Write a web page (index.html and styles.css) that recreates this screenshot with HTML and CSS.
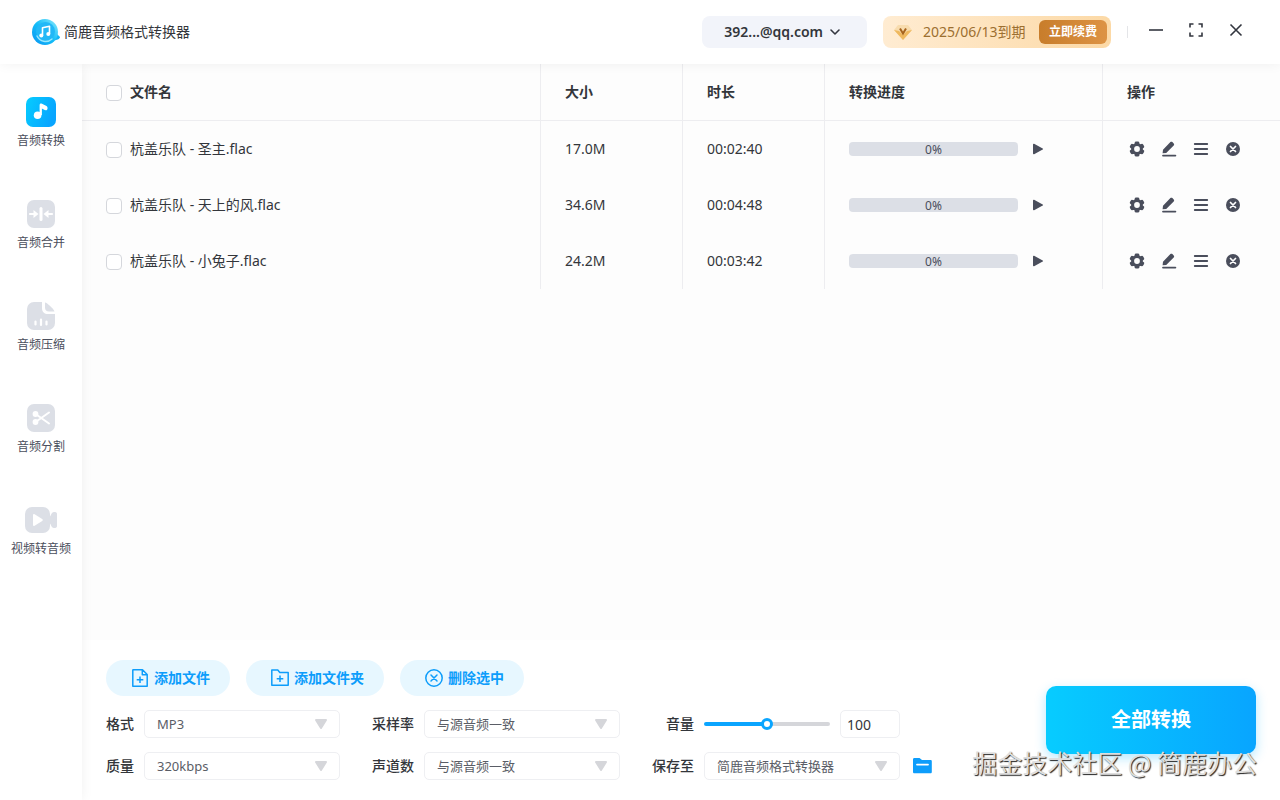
FILE: index.html
```
<!DOCTYPE html>
<html lang="zh-CN">
<head>
    <meta charset="UTF-8">
    <meta name="viewport" content="width=device-width, initial-scale=1.0">
    <title>简鹿音频格式转换器</title>
    <link rel="stylesheet" href="styles.css">
</head>
<body>
    <!-- shared icons -->
    <svg class="sprite" aria-hidden="true">
        <symbol id="icon-play" viewBox="0 0 12 12">
            <path d="M1 1.4v9.200c0 .6.6.9 1.100.6l8.600-4.600c.5-.3.5-.9 0-1.200L2.100.8C1.600.5 1 .8 1 1.400z" fill="#4a4e5c"/>
        </symbol>
        <symbol id="icon-gear" viewBox="0 0 16 16">
            <g fill="#4a4e5c">
                <rect x="5.7" y="0.4" width="4.6" height="15.2" rx="1.4"/>
                <rect x="5.7" y="0.4" width="4.6" height="15.2" rx="1.4" transform="rotate(60 8 8)"/>
                <rect x="5.7" y="0.4" width="4.6" height="15.2" rx="1.4" transform="rotate(120 8 8)"/>
                <circle cx="8" cy="8" r="5.9"/>
            </g>
            <circle cx="8" cy="8" r="2.9" fill="#fdfdfd"/>
        </symbol>
        <symbol id="icon-edit" viewBox="0 0 16 16">
            <path d="M1.6 12.2l.4-3.5 7.4-7.6c.6-.6 1.4-.6 2 0l1.3 1.3c.6.6.6 1.4 0 2L5.2 12z" fill="#4a4e5c"/>
            <path d="M2 14.6h12.4" stroke="#4a4e5c" stroke-width="1.8" stroke-linecap="round"/>
        </symbol>
        <symbol id="icon-list" viewBox="0 0 16 16">
            <path d="M1.8 3h12.4M1.8 8h12.4M1.8 13h12.4" stroke="#4a4e5c" stroke-width="1.9" stroke-linecap="round"/>
        </symbol>
        <symbol id="icon-remove" viewBox="0 0 16 16">
            <circle cx="8" cy="8" r="7" fill="#4a4e5c"/>
            <path d="M5.5 5.5l5 5M10.5 5.5l-5 5" stroke="#fff" stroke-width="1.7" stroke-linecap="round"/>
        </symbol>
    </svg>

    <header class="topbar">
        <div class="brand">
            <svg width="28" height="28" viewBox="0 0 28 28">
                <defs>
                    <linearGradient id="logo-fill" x1="0" y1="1" x2="1" y2="0">
                        <stop offset="0" stop-color="#0a94f2"/>
                        <stop offset="0.5" stop-color="#14bdf8"/>
                        <stop offset="1" stop-color="#8ceafc"/>
                    </linearGradient>
                </defs>
                <path d="M20 20l4-5 4 4c0 2-3 3-8 4z" fill="#14b4f6"/>
                <circle cx="13" cy="14" r="13" fill="url(#logo-fill)"/>
                <circle cx="13.5" cy="13.5" r="9.5" fill="#22b8f7"/>
                <path d="M5 18a9.500 9.500 0 0 0 15 3" fill="none" stroke="#9be8fd" stroke-width="1.4" stroke-linecap="round"/>
                <path d="M10.5 17.5V9.800l7-1.600v7.800" fill="none" stroke="#fff" stroke-width="1.6" stroke-linejoin="round"/>
                <circle cx="9.3" cy="17.4" r="2" fill="#fff"/>
                <circle cx="16.3" cy="16" r="2" fill="#fff"/>
            </svg>
            <span>简鹿音频格式转换器</span>
        </div>
        <div class="topbar-right">
            <button class="account" type="button">
                392...@qq.com
                <svg width="12" height="12" viewBox="0 0 12 12"><path d="M2 4l4 4 4-4" fill="none" stroke="#33363f" stroke-width="1.6" stroke-linecap="round" stroke-linejoin="round"/></svg>
            </button>
            <div class="vip">
                <svg width="20" height="20" viewBox="0 0 20 20">
                    <path d="M5 3h10l4 5-9 10L1 8z" fill="#f8dcae"/>
                    <path d="M1 8l5 1 4 4 4-4 5-1-9 10z" fill="#efb95f"/>
                    <path d="M7 6.5l3 5 3-5" fill="none" stroke="#a8651d" stroke-width="2"/>
                </svg>
                <span>2025/06/13到期</span>
                <button class="renew" type="button">立即续费</button>
            </div>
            <span class="divider"></span>
            <button class="win-btn" type="button" aria-label="最小化">
                <svg width="16" height="16" viewBox="0 0 16 16"><path d="M1 8h14" stroke="#33363f" stroke-width="1.6"/></svg>
            </button>
            <button class="win-btn" type="button" aria-label="最大化">
                <svg width="16" height="16" viewBox="0 0 16 16"><path d="M2 5.5V2h3.5M10.5 2H14v3.5M14 10.5V14h-3.5M5.5 14H2v-3.5" fill="none" stroke="#33363f" stroke-width="1.6"/></svg>
            </button>
            <button class="win-btn" type="button" aria-label="关闭">
                <svg width="16" height="16" viewBox="0 0 16 16"><path d="M2.5 2.5l11 11M13.5 2.5l-11 11" stroke="#33363f" stroke-width="1.6"/></svg>
            </button>
        </div>
    </header>

    <div class="layout">
        <nav class="sidebar">
            <a class="nav-item" href="#">
                <svg width="32" height="32" viewBox="0 0 32 32">
                    <defs>
                        <linearGradient id="nav-fill" x1="0" y1="0" x2="1" y2="0.4">
                            <stop offset="0" stop-color="#06cdff"/>
                            <stop offset="1" stop-color="#08a5ff"/>
                        </linearGradient>
                    </defs>
                    <rect x="1" y="1" width="30" height="30" rx="7" fill="url(#nav-fill)"/>
                    <circle cx="12.6" cy="19.3" r="3.8" fill="#fff"/>
                    <path d="M14.6 19V9.2c0-1.5 1-2.2 2.4-1.5l4.5 2.2c1.5.8 1.500 4.300-.6 4.300-1.600 0-2.800-.8-4-1.600V19z" fill="#fff"/>
                </svg>
                音频转换
            </a>
            <a class="nav-item" href="#">
                <svg width="32" height="32" viewBox="0 0 32 32">
                    <rect x="2" y="2" width="28" height="28" rx="7" fill="#dcdfe6"/>
                    <path d="M16 10.5v11" stroke="#fff" stroke-width="3" stroke-linecap="round"/>
                    <path d="M5 16h4M27 16h-4" stroke="#fff" stroke-width="2.2" stroke-linecap="round"/>
                    <path d="M8.500 12l5 4-5 4zM23.500 12l-5 4 5 4z" fill="#fff"/>
                </svg>
                音频合并
            </a>
            <a class="nav-item" href="#">
                <svg width="32" height="32" viewBox="0 0 32 32">
                    <path d="M9 2h8v6c0 4 2.500 6 6 6h7v9a7 7 0 0 1-7 7H9a7 7 0 0 1-7-7V9a7 7 0 0 1 7-7z" fill="#dcdfe6"/>
                    <path d="M20 2.500c2 .3 8.500 6 9.500 9H24c-2.500 0-4-1.500-4-4z" fill="#dcdfe6"/>
                    <path d="M10.500 21.500v3M16 19.500v5.500M21.500 21.500v3" stroke="#fff" stroke-width="2.2" stroke-linecap="round"/>
                </svg>
                音频压缩
            </a>
            <a class="nav-item" href="#">
                <svg width="32" height="32" viewBox="0 0 32 32">
                    <rect x="2" y="2" width="28" height="28" rx="7" fill="#dcdfe6"/>
                    <path d="M12 13l12 8.500M12 19l12-8.500" stroke="#fff" stroke-width="2" stroke-linecap="round"/>
                    <circle cx="10.5" cy="12" r="2.9" fill="#fff"/>
                    <circle cx="10.5" cy="20" r="2.9" fill="#fff"/>
                </svg>
                音频分割
            </a>
            <a class="nav-item" href="#">
                <svg width="32" height="32" viewBox="0 0 32 32">
                    <rect x="0" y="3" width="25" height="26" rx="7" fill="#dcdfe6"/>
                    <path d="M24 13c2 0 2-5 5-5 2 0 3 .5 3 2v12c0 1.500-1 2-3 2-3 0-3-5-5-5z" fill="#dcdfe6"/>
                    <path d="M8 11v10c0 1 .8 1.300 1.600.8l7.600-4.800c.8-.6.8-1.400 0-2l-7.600-4.800c-.8-.5-1.600-.2-1.600.8z" fill="#fff"/>
                </svg>
                视频转音频
            </a>
        </nav>

        <main class="content">
            <div class="files">
                <table class="file-table">
                    <colgroup>
                        <col>
                        <col class="col-small">
                        <col class="col-small">
                        <col class="col-progress">
                        <col class="col-actions">
                    </colgroup>
                    <thead>
                        <tr>
                            <th><label class="check"><input type="checkbox">文件名</label></th>
                            <th>大小</th>
                            <th>时长</th>
                            <th>转换进度</th>
                            <th>操作</th>
                        </tr>
                    </thead>
                    <tbody>
                        <tr>
                            <td><label class="check"><input type="checkbox">杭盖乐队 - 圣主.flac</label></td>
                            <td>17.0M</td>
                            <td>00:02:40</td>
                            <td>
                                <div class="progress">
                                    <div class="bar">0%</div>
                                    <button class="icon-btn" type="button" aria-label="开始"><svg width="12" height="12"><use href="#icon-play"/></svg></button>
                                </div>
                            </td>
                            <td>
                                <div class="actions">
                                    <button class="icon-btn" type="button" aria-label="设置"><svg width="16" height="16"><use href="#icon-gear"/></svg></button>
                                    <button class="icon-btn" type="button" aria-label="编辑"><svg width="16" height="16"><use href="#icon-edit"/></svg></button>
                                    <button class="icon-btn" type="button" aria-label="详情"><svg width="16" height="16"><use href="#icon-list"/></svg></button>
                                    <button class="icon-btn" type="button" aria-label="删除"><svg width="16" height="16"><use href="#icon-remove"/></svg></button>
                                </div>
                            </td>
                        </tr>
                        <tr>
                            <td><label class="check"><input type="checkbox">杭盖乐队 - 天上的风.flac</label></td>
                            <td>34.6M</td>
                            <td>00:04:48</td>
                            <td>
                                <div class="progress">
                                    <div class="bar">0%</div>
                                    <button class="icon-btn" type="button" aria-label="开始"><svg width="12" height="12"><use href="#icon-play"/></svg></button>
                                </div>
                            </td>
                            <td>
                                <div class="actions">
                                    <button class="icon-btn" type="button" aria-label="设置"><svg width="16" height="16"><use href="#icon-gear"/></svg></button>
                                    <button class="icon-btn" type="button" aria-label="编辑"><svg width="16" height="16"><use href="#icon-edit"/></svg></button>
                                    <button class="icon-btn" type="button" aria-label="详情"><svg width="16" height="16"><use href="#icon-list"/></svg></button>
                                    <button class="icon-btn" type="button" aria-label="删除"><svg width="16" height="16"><use href="#icon-remove"/></svg></button>
                                </div>
                            </td>
                        </tr>
                        <tr>
                            <td><label class="check"><input type="checkbox">杭盖乐队 - 小兔子.flac</label></td>
                            <td>24.2M</td>
                            <td>00:03:42</td>
                            <td>
                                <div class="progress">
                                    <div class="bar">0%</div>
                                    <button class="icon-btn" type="button" aria-label="开始"><svg width="12" height="12"><use href="#icon-play"/></svg></button>
                                </div>
                            </td>
                            <td>
                                <div class="actions">
                                    <button class="icon-btn" type="button" aria-label="设置"><svg width="16" height="16"><use href="#icon-gear"/></svg></button>
                                    <button class="icon-btn" type="button" aria-label="编辑"><svg width="16" height="16"><use href="#icon-edit"/></svg></button>
                                    <button class="icon-btn" type="button" aria-label="详情"><svg width="16" height="16"><use href="#icon-list"/></svg></button>
                                    <button class="icon-btn" type="button" aria-label="删除"><svg width="16" height="16"><use href="#icon-remove"/></svg></button>
                                </div>
                            </td>
                        </tr>
                    </tbody>
                </table>
            </div>

            <div class="panel">
                <div class="panel-left">
                    <div class="toolbar">
                        <button class="pill" type="button">
                            <svg width="20" height="20" viewBox="0 0 20 20" fill="none" stroke="#0d9dfb" stroke-width="1.5" stroke-linejoin="round"><path d="M3 1.800h9.500l4.700 4.700v11.700H2.800V2zM12.300 2v4.700h4.700M10 8.500v6.500M6.700 11.800h6.600"/></svg>
                            添加文件
                        </button>
                        <button class="pill" type="button">
                            <svg width="20" height="20" viewBox="0 0 20 20" fill="none" stroke="#0d9dfb" stroke-width="1.5" stroke-linejoin="round"><path d="M1.800 2h6l2 2.500h8.400v12.700H1.800zM10 7.500v6.500M6.700 10.800h6.600"/></svg>
                            添加文件夹
                        </button>
                        <button class="pill" type="button">
                            <svg width="20" height="20" viewBox="0 0 20 20" fill="none" stroke="#0d9dfb" stroke-width="1.5" stroke-linecap="round"><circle cx="10" cy="10" r="8.2"/><path d="M7 7l6 6M13 7l-6 6"/></svg>
                            删除选中
                        </button>
                    </div>
                    <div class="options">
                        <div class="option-group">
                            <div class="field">
                                <label for="format">格式</label>
                                <select id="format"><option>MP3</option></select>
                            </div>
                            <div class="field">
                                <label for="quality">质量</label>
                                <select id="quality"><option>320kbps</option></select>
                            </div>
                        </div>
                        <div class="option-group">
                            <div class="field">
                                <label for="rate">采样率</label>
                                <select id="rate"><option>与源音频一致</option></select>
                            </div>
                            <div class="field">
                                <label for="channels">声道数</label>
                                <select id="channels"><option>与源音频一致</option></select>
                            </div>
                        </div>
                        <div class="option-group wide-label">
                            <div class="field">
                                <label for="volume">音量</label>
                                <div class="volume">
                                    <input class="slider" type="range" id="volume" min="0" max="200" value="100">
                                    <input class="number" type="text" value="100" aria-label="音量数值">
                                </div>
                            </div>
                            <div class="field">
                                <label for="save-to">保存至</label>
                                <select id="save-to"><option>简鹿音频格式转换器</option></select>
                                <button class="icon-btn" type="button" aria-label="打开文件夹">
                                    <svg width="24" height="20" viewBox="0 0 24 20"><path d="M3 3.500c0-1 .5-1.500 1.500-1.500h5l2.500 2h8.500c.8 0 1.300.5 1.300 1.300V16c0 .8-.5 1.300-1.300 1.300h-16c-1 0-1.500-.5-1.500-1.300z" fill="#0d9dfb"/><path d="M7 8.600h11" stroke="#fff" stroke-width="1.8" stroke-linecap="round"/></svg>
                                </button>
                            </div>
                        </div>
                    </div>
                </div>
                <button class="convert" type="button">全部转换</button>
            </div>
        </main>
    </div>

    <div class="watermark">掘金技术社区 @ 简鹿办公</div>
</body>
</html>
```
FILE: styles.css
```
* {
    box-sizing: border-box;
}
body {
    margin: 0;
    min-height: 100vh;
    display: flex;
    flex-direction: column;
    position: relative;
    background: #fff;
    color: #33363b;
    font-family: "Noto Sans", "Noto Sans CJK SC", sans-serif;
    font-size: 14px;
    line-height: 20px;
}
button, input, select {
    font: inherit;
    color: inherit;
}
button {
    border: none;
    background: none;
    padding: 0;
    cursor: pointer;
    display: flex;
    align-items: center;
    justify-content: center;
}
svg {
    display: block;
    flex: none;
}
.sprite {
    position: absolute;
    width: 0;
    height: 0;
}

/* top bar */
.topbar {
    height: 64px;
    padding: 0 32px;
    display: flex;
    align-items: center;
    justify-content: space-between;
    background: #fff;
    box-shadow: 0 0 12px rgba(0, 0, 0, 0.06);
    z-index: 2;
}
.brand {
    display: flex;
    align-items: center;
    gap: 4px;
}
.topbar-right {
    display: flex;
    align-items: center;
    gap: 16px;
}
.account {
    height: 32px;
    padding: 0 26px 0 22px;
    gap: 6px;
    border-radius: 8px;
    background: #f2f4fa;
    font-weight: 600;
}
.vip {
    min-width: 228px;
    height: 32px;
    padding: 0 4px 0 10px;
    display: flex;
    align-items: center;
    gap: 10px;
    border-radius: 8px;
    background: linear-gradient(90deg, #ffecd2, #fcd9a6);
    color: #9c6f30;
}
.renew {
    height: 24px;
    margin-left: auto;
    padding: 0 10px;
    border-radius: 6px;
    background: linear-gradient(90deg, #c87d2b, #dd9344);
    color: #fff;
    font-size: 12px;
    font-weight: bold;
}
.divider {
    width: 1px;
    height: 12px;
    background: #e4e5e8;
}
.win-btn {
    width: 24px;
    height: 24px;
    margin-bottom: 4px;
}

/* sidebar */
.layout {
    flex: 1;
    display: flex;
}
.sidebar {
    width: 82px;
    padding-top: 32px;
    display: flex;
    flex-direction: column;
    gap: 47px;
    background: #fff;
    box-shadow: 0 0 12px rgba(0, 0, 0, 0.06);
    z-index: 1;
}
.nav-item {
    display: flex;
    flex-direction: column;
    align-items: center;
    gap: 3px;
    color: #4a4e5c;
    font-size: 12px;
    text-decoration: none;
}

/* file list */
.content {
    flex: 1;
    display: flex;
    flex-direction: column;
}
.files {
    flex: 1;
    background: #fdfdfd;
}
.file-table {
    width: 100%;
    table-layout: fixed;
    border-collapse: separate;
    border-spacing: 0;
}
.col-small {
    width: 142px;
}
.col-progress {
    width: 278px;
}
.col-actions {
    width: 178px;
}
th, td {
    height: 56px;
    padding: 0 24px;
    text-align: left;
    border-left: 1px solid #ededf0;
}
th {
    height: 57px;
    border-bottom: 1px solid #ededf0;
    font-weight: bold;
}
th:first-child, td:first-child {
    border-left: none;
}
.check {
    display: flex;
    align-items: center;
    gap: 8px;
}
.check input {
    appearance: none;
    width: 16px;
    height: 16px;
    margin: 2px 0 0;
    border: 1px solid #d5d7dc;
    border-radius: 4px;
    background: #fff;
}
.check input:checked {
    background: #0aa5ff;
}
.progress {
    display: flex;
    align-items: center;
    gap: 14px;
}
.bar {
    width: 169px;
    height: 14px;
    border-radius: 4px;
    background: #dcdfe6;
    color: #4a4e5c;
    font-size: 12px;
    line-height: 16px;
    text-align: center;
}
.actions {
    display: flex;
    gap: 16px;
    padding-left: 2px;
}

/* bottom panel */
.panel {
    padding: 20px 24px;
    display: flex;
    align-items: center;
    justify-content: space-between;
}
.toolbar {
    display: flex;
    gap: 16px;
    margin-bottom: 14px;
}
.pill {
    height: 36px;
    padding: 0 20px 0 24px;
    gap: 4px;
    border-radius: 18px;
    background: #e7f7ff;
    color: #0d9dfb;
    font-weight: bold;
}
.options {
    display: flex;
    gap: 32px;
}
.option-group {
    display: flex;
    flex-direction: column;
    gap: 14px;
}
.field {
    display: flex;
    align-items: center;
    gap: 10px;
}
.field label {
    font-weight: 500;
    text-align: right;
}
.wide-label label {
    min-width: 42px;
}
select {
    appearance: none;
    width: 196px;
    height: 28px;
    padding: 0 32px 0 12px;
    border: 1px solid #eeeff2;
    border-radius: 5px;
    background: #fff url("data:image/svg+xml,%3Csvg xmlns='http://www.w3.org/2000/svg' width='14' height='12'%3E%3Cpath d='M2 2h10L7 10z' fill='%23d5d6da' stroke='%23d5d6da' stroke-width='2' stroke-linejoin='round'/%3E%3C/svg%3E") no-repeat right 11px center;
    color: #5a5d66;
    font-size: 13px;
}
.volume {
    width: 196px;
    display: flex;
    align-items: center;
    gap: 10px;
}
.slider {
    appearance: none;
    flex: 1;
    min-width: 0;
    height: 12px;
    margin: 0;
    background: none;
}
.slider::-webkit-slider-runnable-track {
    height: 4px;
    border-radius: 2px;
    background: linear-gradient(90deg, #0aa5ff 50%, #d5d6da 50%);
}
.slider::-webkit-slider-thumb {
    appearance: none;
    width: 12px;
    height: 12px;
    margin-top: -4px;
    border: 3px solid #0aa5ff;
    border-radius: 50%;
    background: #fff;
}
.number {
    width: 60px;
    height: 28px;
    padding: 0 6px;
    border: 1px solid #eeeff2;
    border-radius: 5px;
}
.convert {
    width: 210px;
    height: 68px;
    border-radius: 10px;
    background: linear-gradient(90deg, #07ccff, #08a5ff);
    box-shadow: 0 4px 12px rgba(8, 180, 255, 0.3);
    color: #fff;
    font-size: 20px;
    font-weight: bold;
}

/* sits over the bottom right corner of the window */
.watermark {
    position: absolute;
    right: 23px;
    bottom: 22px;
    z-index: 3;
    color: #dedede;
    font-family: "Noto Sans CJK SC", sans-serif;
    font-size: 25px;
    line-height: 32px;
    text-shadow: 1px 1px 1px #222;
    pointer-events: none;
}
```
